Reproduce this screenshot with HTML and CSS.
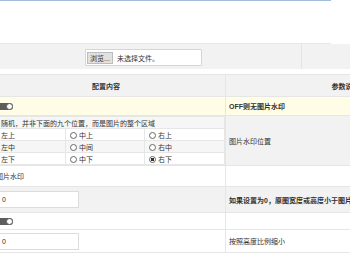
FILE: index.html
```html
<!DOCTYPE html>
<html lang="zh-CN">
<head>
    <meta charset="UTF-8">
    <title>水印设置</title>
    <link rel="stylesheet" href="styles.css">
</head>
<body>
    <div class="page">
        <div class="top-bar"></div>

        <div class="file-row">
            <div class="file-cell">
                <span class="file-box">
                    <span class="file-btn">浏览...</span>
                    <span class="file-name">未选择文件。</span>
                </span>
            </div>
            <div class="file-side"></div>
        </div>

        <table class="config">
            <colgroup>
                <col class="col-value">
                <col class="col-desc">
            </colgroup>
            <thead>
                <tr>
                    <th>配置内容</th>
                    <th>参数说明</th>
                </tr>
            </thead>
            <tbody>
                <tr class="row-yellow">
                    <td><span class="switch"><span class="knob"></span></span></td>
                    <td class="desc bold">OFF则无图片水印</td>
                </tr>
                <tr class="row-pos">
                    <td class="pos-cell">
                        <table class="pos">
                            <tr class="shade">
                                <td colspan="3"><span class="radio"></span>随机，并非下面的九个位置，而是图片的整个区域</td>
                            </tr>
                            <tr>
                                <td class="c1"><span class="radio"></span>左上</td>
                                <td class="c2"><span class="radio"></span>中上</td>
                                <td><span class="radio"></span>右上</td>
                            </tr>
                            <tr class="shade">
                                <td class="c1"><span class="radio"></span>左中</td>
                                <td class="c2"><span class="radio"></span>中间</td>
                                <td><span class="radio"></span>右中</td>
                            </tr>
                            <tr>
                                <td class="c1"><span class="radio"></span>左下</td>
                                <td class="c2"><span class="radio"></span>中下</td>
                                <td><span class="radio checked"></span>右下</td>
                            </tr>
                        </table>
                    </td>
                    <td class="desc gray">图片水印位置</td>
                </tr>
                <tr class="row-type">
                    <td class="type-cell">图片水印</td>
                    <td></td>
                </tr>
                <tr class="row-min gray">
                    <td><span class="text-input">0</span></td>
                    <td class="desc bold">如果设置为0，原图宽度或高度小于图片水印时不加水印</td>
                </tr>
                <tr class="row-switch">
                    <td><span class="switch"><span class="knob"></span></span></td>
                    <td></td>
                </tr>
                <tr class="row-scale">
                    <td><span class="text-input">0</span></td>
                    <td class="desc">按照高度比例缩小</td>
                </tr>
            </tbody>
        </table>
    </div>
</body>
</html>
```

FILE: styles.css
```css
body {
    margin: 0;
    background-color: #ffffff;
    font-family: "Liberation Sans", "Noto Sans CJK SC", sans-serif;
    font-size: 7px;
    color: #333;
    overflow: hidden;
}

.page {
    margin-left: -14px;
    width: 480px;
}

.top-bar {
    width: 345px;
    height: 42px;
    border-top: 1px solid #a3bbdd;
    border-bottom: 1px solid #e8e8e8;
}

/* file upload row */
.file-row {
    display: flex;
    height: 25px;
    background-color: #f2f2f2;
    border-bottom: 5px solid #ffffff;
}

.file-cell {
    width: 316px;
    padding-left: 99px;
    padding-top: 5px;
    box-sizing: border-box;
    border-right: 1px solid #e4e4e4;
}

.file-side {
    flex: 1;
}

.file-box {
    display: flex;
    align-items: center;
    width: 114px;
    height: 15px;
    padding-left: 1px;
    background-color: #ffffff;
    border: 1px solid #d6d6d6;
    border-radius: 1px;
}

.file-btn {
    display: inline-block;
    width: 26px;
    height: 12px;
    line-height: 12px;
    text-align: center;
    background-color: #e1e1e1;
    border: 1px solid #bdbdbd;
    box-sizing: border-box;
}

.file-name {
    margin-left: 4px;
}

/* main config table */
.config {
    width: 480px;
    border-collapse: collapse;
    table-layout: fixed;
}

.col-value {
    width: 239px;
}

.config th,
.config > tbody > tr > td {
    border: 1px solid #e6e6e6;
    padding: 0;
    vertical-align: middle;
}

.config th {
    height: 21px;
    background-color: #f2f2f2;
    font-weight: bold;
    text-align: center;
}

.config td.desc {
    padding-left: 3px;
}

.bold {
    font-weight: bold;
}

.gray,
.config td.gray {
    background-color: #f2f2f2;
}

.row-yellow td {
    height: 18px;
    background-color: #fffde6;
}

.row-type td {
    height: 20px;
}

.row-min td {
    height: 25px;
}

.row-switch td {
    height: 16px;
}

.row-scale td {
    height: 22px;
}

.switch {
    display: inline-flex;
    justify-content: flex-end;
    align-items: center;
    width: 22px;
    height: 7px;
    margin-left: 4px;
    background-color: #5d5d5d;
    border-radius: 4px;
    vertical-align: middle;
}

.knob {
    width: 5px;
    height: 5px;
    background-color: #ffffff;
    border: 1px solid #5d5d5d;
    border-radius: 50%;
}

/* position grid */
.pos-cell {
    padding: 1px 3px 1px 0;
    background-color: #ffffff;
}

.pos {
    width: 100%;
    border-collapse: collapse;
}

.pos td {
    height: 11px;
    padding: 0 0 0 4px;
    border: 1px solid #e6e6e6;
    white-space: nowrap;
}

.pos .shade td {
    background-color: #f6f6f6;
}

.pos .c1 {
    width: 73px;
}

.pos .c2 {
    width: 74px;
}

.radio {
    display: inline-block;
    width: 5px;
    height: 5px;
    margin-right: 2px;
    border: 1px solid #666;
    border-radius: 50%;
    vertical-align: -1px;
    background-color: #ffffff;
}

.radio.checked {
    background: radial-gradient(circle, #333 0 45%, #ffffff 55%);
}

.type-cell {
    padding-left: 9px !important;
}

.text-input {
    display: inline-block;
    width: 92px;
    height: 17px;
    line-height: 15px;
    padding-left: 14px;
    margin-left: 0;
    background-color: #ffffff;
    border: 1px solid #dcdcdc;
    box-sizing: border-box;
    vertical-align: middle;
}
```
